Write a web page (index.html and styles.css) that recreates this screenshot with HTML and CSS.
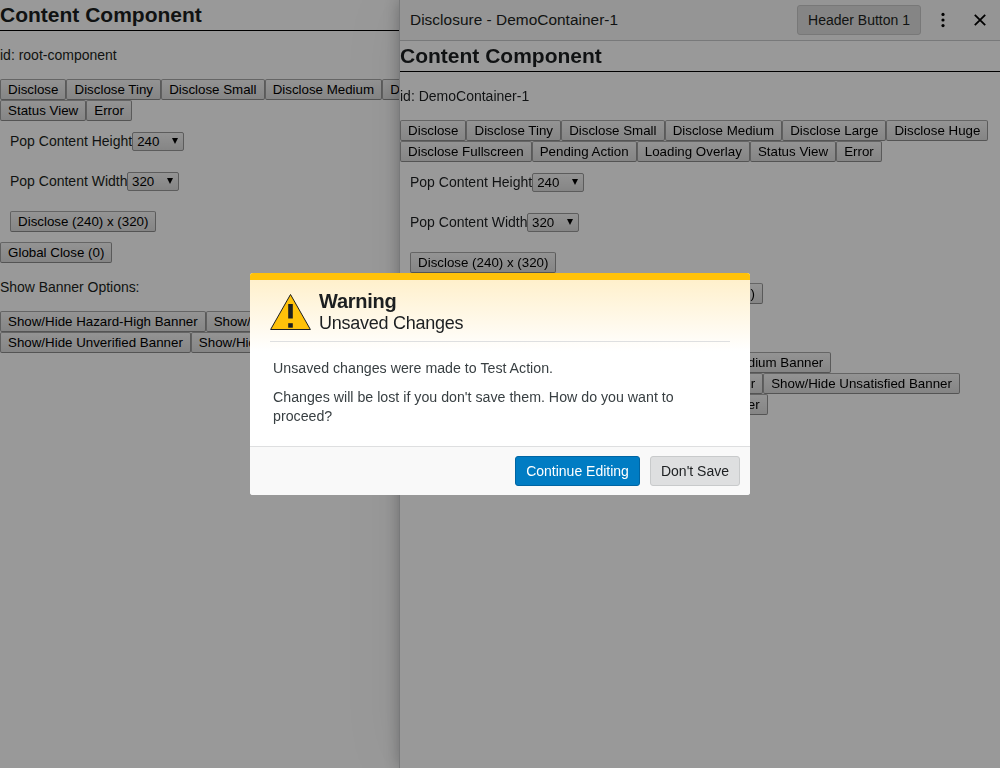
FILE: index.html
```html
<!DOCTYPE html>
<html lang="en">
<head>
<meta charset="utf-8">
<title>Disclosure</title>
<link rel="stylesheet" href="styles.css">
</head>
<body>
<main class="component root">
  <h2 class="title">Content Component</h2>
  <p class="ident">id: root-component</p>
  <div class="buttons"><button>Disclose</button><button>Disclose Tiny</button><button>Disclose Small</button><button>Disclose Medium</button><button>Disclose Large</button><button>Disclose Huge</button><button>Disclose Fullscreen</button><button>Pending Action</button><button>Loading Overlay</button><button>Status View</button><button>Error</button></div>
  <form class="sizes">
    <div class="field"><label>Pop Content Height</label><span class="select">240<i></i></span></div>
    <div class="field"><label class="width-label">Pop Content Width</label><span class="select">320<i></i></span></div>
    <button type="button">Disclose (240) x (320)</button>
  </form>
  <div class="buttons closers"><button>Global Close (0)</button></div>
  <p class="banner-label">Show Banner Options:</p>
  <div class="buttons banners"><button>Show/Hide Hazard-High Banner</button><button>Show/Hide Hazard-Medium Banner</button><button>Show/Hide Hazard-Low Banner</button><button>Show/Hide Error Banner</button><button>Show/Hide Unsatisfied Banner</button><button>Show/Hide Unverified Banner</button><button>Show/Hide Custom Banner</button></div>
</main>
<aside class="panel">
  <header class="panel-header">
    <span class="panel-title">Disclosure - DemoContainer-1</span>
    <button class="header-button">Header Button 1</button>
    <svg class="more" width="16" height="16" viewBox="0 0 16 16"><circle cx="8" cy="2.4" r="1.6"/><circle cx="8" cy="8" r="1.6"/><circle cx="8" cy="13.6" r="1.6"/></svg>
    <svg class="close" width="12" height="12" viewBox="0 0 12 12"><path d="M.8.8l10.4 10.4M11.2.8L.8 11.2"/></svg>
  </header>
  <section class="component">
    <h2 class="title">Content Component</h2>
    <p class="ident">id: DemoContainer-1</p>
    <div class="buttons"><button>Disclose</button><button>Disclose Tiny</button><button>Disclose Small</button><button>Disclose Medium</button><button>Disclose Large</button><button>Disclose Huge</button><button>Disclose Fullscreen</button><button>Pending Action</button><button>Loading Overlay</button><button>Status View</button><button>Error</button></div>
    <form class="sizes">
      <div class="field"><label>Pop Content Height</label><span class="select">240<i></i></span></div>
      <div class="field"><label class="width-label">Pop Content Width</label><span class="select">320<i></i></span></div>
      <button type="button">Disclose (240) x (320)</button>
    </form>
    <div class="buttons closers panel-closers"><button>Dismiss</button><button>Close Disclosure</button><button>Global Close (1)</button></div>
    <p class="banner-label">Show Banner Options:</p>
    <div class="buttons banners"><button>Show/Hide Hazard-High Banner</button><button>Show/Hide Hazard-Medium Banner</button><button>Show/Hide Hazard-Low Banner</button><button>Show/Hide Error Banner</button><button>Show/Hide Unsatisfied Banner</button><button>Show/Hide Unverified Banner</button><button>Show/Hide Custom Banner</button></div>
  </section>
</aside>
<div class="overlay">
  <div class="dialog" role="alertdialog">
    <div class="dialog-head">
      <div class="dialog-heading">
        <svg class="warning" width="41" height="38" viewBox="0 0 41 38"><path d="M20.5 1.5L40.4 36.5H.6z"/><rect x="18.2" y="11" width="4.6" height="14.5"/><rect x="18.2" y="30.2" width="4.6" height="4.5"/></svg>
        <div><div class="dialog-type">Warning</div><div class="dialog-title">Unsaved Changes</div></div>
      </div>
    </div>
    <div class="dialog-body"><p>Unsaved changes were made to Test Action.</p><p>Changes will be lost if you don't save them. How do you want to proceed?</p></div>
    <footer class="dialog-foot"><button class="action primary">Continue Editing</button><button class="action">Don't Save</button></footer>
  </div>
</div>
</body>
</html>
```
FILE: styles.css
```css
* { box-sizing: border-box; }
body {
  margin: 0;
  height: 768px;
  overflow: hidden;
  background: #fff;
  color: #1c1f21;
  font: 14px/20px "Liberation Sans", Arial, sans-serif;
}
p { margin: 0; }
.component { width: 100%; }
.title {
  margin: 0;
  height: 31px;
  border-bottom: 1px solid #000;
  font-size: 21px;
  line-height: 30px;
}
.ident { padding: 14px 0; }
.buttons { display: flex; flex-wrap: wrap; }
.buttons button, .sizes button {
  height: 21px;
  padding: 0 7.05px;
  border: 1px solid #a6a6a6;
  border-color: #a9a9a9 #979797 #8c8c8c #a0a0a0;
  border-radius: 2px;
  background: linear-gradient(#f6f6f6, #dedede);
  color: #000;
  font: 13.333px/19px "Liberation Sans", Arial, sans-serif;
  white-space: nowrap;
}
.buttons.banners button { padding: 0 7px; }
.sizes { padding: 10px 10px 0; }
.field { display: flex; height: 40px; align-items: flex-start; }
.width-label { width: 117px; white-space: nowrap; }
.select {
  display: flex;
  align-items: center;
  justify-content: space-between;
  width: 52px;
  height: 19px;
  margin-top: 1px;
  padding: 0 5px 0 4px;
  border: 1px solid #999;
  border-radius: 2px;
  background: linear-gradient(#f6f6f6, #dedede);
  color: #000;
  font-size: 13.333px;
}
.select i {
  margin-top: -2px;
  border: 3px solid transparent;
  border-top: 6px solid #000;
  border-bottom: 0;
}
.closers { padding-top: 10px; }
.panel-closers { width: 363px; justify-content: flex-end; }
.banner-label { padding: 14px 0; letter-spacing: -.03px; }
.panel {
  position: fixed;
  inset: 0 0 0 400px;
  background: #fff;
  box-shadow: 0 0 0 1px #c8cacb, 0 0 16px rgba(28, 31, 33, .35), 0 0 64px rgba(28, 31, 33, .06);
}
.panel-header {
  display: flex;
  align-items: center;
  height: 41px;
  padding: 0 14px 0 10px;
  border-bottom: 1px solid #c8cacb;
  background: #f8f8f8;
}
.panel-title { flex: 1; font-size: 15.4px; letter-spacing: .04px; }
.header-button {
  width: 124px;
  height: 30px;
  padding: 0;
  border: 1px solid #c8c8c8;
  border-radius: 3px;
  background: #dedede;
  color: #1c1f21;
  font: 14px "Liberation Sans", Arial, sans-serif;
}
.more { margin: 0 23px 0 14px; }
.close { fill: none; stroke: #000; stroke-width: 1.8; }
.overlay {
  position: fixed;
  inset: 0;
  display: flex;
  align-items: center;
  justify-content: center;
  background: rgba(0, 0, 0, .4);
}
.dialog {
  width: 500px;
  height: 222px;
  overflow: hidden;
  border-radius: 3px;
  background: #fff;
}
.dialog-head {
  height: 78px;
  padding: 13px 20px 0;
  border-top: 7px solid #ffc20a;
  background: linear-gradient(#fff0cc, #fff);
}
.dialog-heading {
  display: flex;
  height: 49px;
  gap: 8px;
  border-bottom: 1px solid #dedfe0;
}
.warning { fill: #1c1f21; }
.warning path { fill: #ffc20a; stroke: #1c1f21; }
.dialog-type { margin-top: -3px; font-size: 20px; font-weight: bold; line-height: 22px; letter-spacing: -.25px; }
.dialog-title { font-size: 18px; line-height: 22px; letter-spacing: -.25px; }
.dialog-body {
  height: 95px;
  padding: 8px 23px 0;
  color: #383f42;
  font-size: 14.21px;
  line-height: 19px;
}
.dialog-body p + p { margin-top: 10px; }
.dialog-foot {
  display: flex;
  justify-content: flex-end;
  gap: 10px;
  height: 49px;
  padding: 9px 10px;
  border-top: 1px solid #dedfe0;
  background: #f9f9f9;
}
.action {
  width: 90px;
  height: 30px;
  padding: 0;
  border: 1px solid #c8cacb;
  border-radius: 3px;
  background: #dedfe0;
  color: #1c1f21;
  font: 14px "Liberation Sans", Arial, sans-serif;
}
.primary { width: 125px; border-color: #0065a3; background: #007cc3; color: #fff; }
```
